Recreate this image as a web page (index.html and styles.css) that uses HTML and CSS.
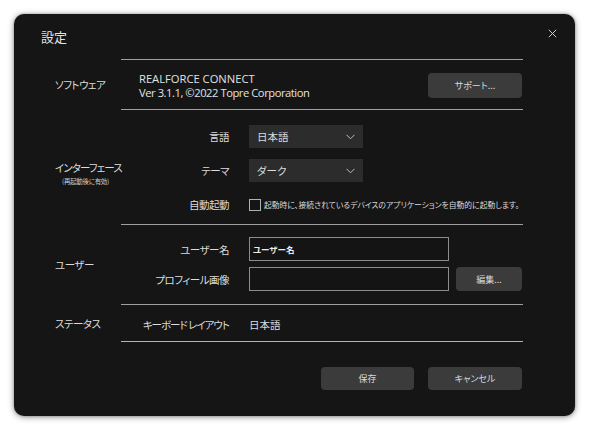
FILE: index.html
```html
<!DOCTYPE html>
<html lang="ja">
<head>
<meta charset="utf-8">
<title>設定</title>
<link rel="stylesheet" href="styles.css">
</head>
<body>
<div class="dialog">
  <div class="header">
    <div class="title">設定</div>
    <div class="close">
      <svg width="9" height="9" viewBox="0 0 9 9"><path d="M0.8 0.8 L8.2 8.2 M8.2 0.8 L0.8 8.2" stroke="#cfcfcf" stroke-width="1" fill="none"/></svg>
    </div>
  </div>

  <div class="section sec-software">
    <div class="sec-label">ソフトウェア</div>
    <div class="sec-body software-body">
      <div class="app-info">
        <div class="app-name">REALFORCE CONNECT</div>
        <div class="app-ver">Ver 3.1.1, ©2022 Topre Corporation</div>
      </div>
      <button class="btn btn-support">サポート...</button>
    </div>
  </div>

  <div class="section sec-interface">
    <div class="sec-label">
      <div class="label-main">インターフェース</div>
      <div class="label-sub">(再起動後に有効)</div>
    </div>
    <div class="sec-body rows rows-interface">
      <div class="row">
        <div class="row-label">言語</div>
        <div class="select"><span>日本語</span>
          <svg class="chev" width="9" height="6" viewBox="0 0 9 6"><path d="M0.5 0.8 L4.5 4.8 L8.5 0.8" stroke="#bdbdbd" stroke-width="1" fill="none"/></svg>
        </div>
      </div>
      <div class="row">
        <div class="row-label">テーマ</div>
        <div class="select"><span>ダーク</span>
          <svg class="chev" width="9" height="6" viewBox="0 0 9 6"><path d="M0.5 0.8 L4.5 4.8 L8.5 0.8" stroke="#bdbdbd" stroke-width="1" fill="none"/></svg>
        </div>
      </div>
      <div class="row row-check">
        <div class="row-label">自動起動</div>
        <div class="check">
          <span class="box"></span>
          <span class="check-text">起動時に、接続されているデバイスのアプリケーションを自動的に起動します。</span>
        </div>
      </div>
    </div>
  </div>

  <div class="section sec-user">
    <div class="sec-label">ユーザー</div>
    <div class="sec-body rows rows-user">
      <div class="row">
        <div class="row-label">ユーザー名</div>
        <div class="input"><span class="input-text">ユーザー名</span></div>
      </div>
      <div class="row">
        <div class="row-label">プロフィール画像</div>
        <div class="input"></div>
        <button class="btn btn-edit">編集...</button>
      </div>
    </div>
  </div>

  <div class="section sec-status">
    <div class="sec-label">ステータス</div>
    <div class="sec-body rows rows-status">
      <div class="row">
        <div class="row-label row-label-tight">キーボード レイアウト</div>
        <div class="value">日本語</div>
      </div>
    </div>
  </div>

  <div class="footer">
    <button class="btn btn-foot">保存</button>
    <button class="btn btn-foot">キャンセル</button>
  </div>
</div>
</body>
</html>
```

FILE: styles.css
```css
* { box-sizing: border-box; }
html, body { margin: 0; padding: 0; }
body {
  background: #ffffff;
  width: 590px;
  height: 431px;
  overflow: hidden;
  font-family: "Noto Sans CJK JP", "Noto Sans", sans-serif;
  font-feature-settings: "palt";
  color: #dcdcdc;
}
.dialog {
  margin: 14px 0 0 14px;
  width: 561px;
  height: 402px;
  background: #151515;
  border-radius: 10px;
  box-shadow: 0 1px 6px rgba(0,0,0,0.45), 0 0 2px rgba(0,0,0,0.3);
  display: flex;
  flex-direction: column;
}
.header {
  height: 45px;
  display: flex;
  justify-content: space-between;
  align-items: flex-start;
  padding: 12px 18px 0 27px;
}
.title {
  font-size: 13px;
  line-height: 22px;
  color: #e2e2e2;
}
.close {
  padding-top: 3px;
  line-height: 0;
}
.section {
  display: flex;
}
.sec-label {
  width: 107px;
  padding-left: 41px;
  font-size: 10.5px;
  letter-spacing: -0.5px;
  display: flex;
  flex-direction: column;
  justify-content: center;
  color: #dcdcdc;
  white-space: nowrap;
}
.sec-body {
  width: 402px;
  border-top: 1px solid #a0a0a0;
}
.sec-status .sec-body { border-bottom: 1px solid #b4b4b4; }

.sec-software { height: 50px; }
.software-body {
  display: flex;
  align-items: center;
  justify-content: space-between;
  padding: 0 1px 0 18px;
}
.app-info {
  font-family: "Open Sans", "Noto Sans", sans-serif;
  font-size: 11.2px;
  line-height: 14px;
  color: #e2e2e2;
  padding-top: 2px;
}
.app-ver { letter-spacing: -0.45px; }
.btn {
  font-family: "Noto Sans CJK JP", sans-serif;
  font-feature-settings: "palt";
  background: #3b3b3b;
  color: #d8d8d8;
  border: none;
  border-radius: 4px;
  font-size: 9px;
  padding: 0;
  height: 25px;
  width: 94px;
  flex: none;
}
.btn-support { margin-top: 2px; }

.rows {
  display: flex;
  flex-direction: column;
}
.row {
  display: flex;
  align-items: center;
}
.row-label {
  width: 108px;
  flex: none;
  margin-right: 20px;
  text-align: right;
  font-size: 10.5px;
  letter-spacing: -0.5px;
  color: #dcdcdc;
  white-space: nowrap;
}
.row-label-tight { letter-spacing: -1px; }

.sec-interface { height: 115px; }
.sec-interface .sec-label { padding-top: 13px; align-items: flex-start; }
.label-main { font-size: 10.5px; line-height: 13px; letter-spacing: -0.9px; }
.label-sub { font-size: 6.5px; line-height: 10px; letter-spacing: -0.3px; color: #cfcfcf; margin: 2px 0 0 7px; }
.rows-interface { padding-top: 15px; gap: 11px; }
.select {
  width: 114px;
  height: 23px;
  flex: none;
  background: #2c2c2c;
  display: flex;
  align-items: center;
  justify-content: space-between;
  padding: 0 8px 0 8px;
  font-size: 10.5px;
  color: #dcdcdc;
}
.chev { margin-top: 1px; }
.row-check { height: 23px; }
.check { display: flex; align-items: center; }
.box {
  width: 12px;
  height: 12px;
  border: 1px solid #b0b0b0;
  margin-right: 3px;
  flex: none;
}
.check-text {
  font-size: 7.8px;
  color: #dadada;
  white-space: nowrap;
}

.sec-user { height: 80px; }
.rows-user { padding-top: 12px; gap: 6px; }
.input {
  width: 200px;
  height: 24px;
  flex: none;
  border: 1px solid #8c8c8c;
  background: #141414;
  display: flex;
  align-items: center;
  padding-left: 3px;
}
.input-text {
  font-size: 8.5px;
  font-weight: 700;
  color: #ececec;
}
.btn-edit { width: 66px; height: 24px; margin-left: 7px; }

.sec-status { height: 38px; }
.rows-status { justify-content: center; padding-top: 2px; }
.value { font-size: 10.5px; color: #dcdcdc; }

.footer {
  display: flex;
  justify-content: flex-end;
  gap: 14px;
  padding: 25px 53px 0 0;
}
.btn-foot { width: 93px; height: 23px; }
.btn-foot + .btn-foot { width: 94px; }
```
